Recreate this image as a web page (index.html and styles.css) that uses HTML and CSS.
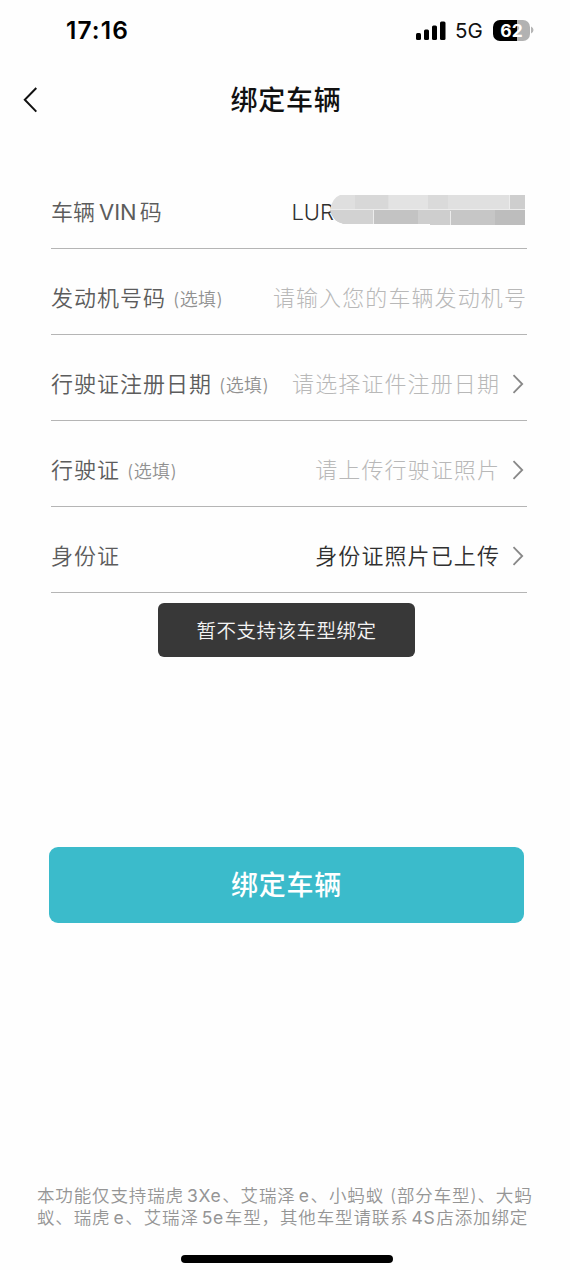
FILE: index.html
```html
<!DOCTYPE html>
<html lang="zh-CN">
<head>
<meta charset="utf-8">
<title>绑定车辆</title>
<link rel="stylesheet" href="styles.css">
</head>
<body>
<div class="screen">
  <header class="status">
    <span class="clock">17:16</span>
    <span class="indicators">
      <svg class="signal" width="30" height="19" viewBox="0 0 30 19"><rect x="0" y="12" width="5" height="7" rx="1.5"/><rect x="8" y="8.5" width="5" height="10.5" rx="1.5"/><rect x="16" y="4.5" width="5" height="14.5" rx="1.5"/><rect x="24" y="0.5" width="5.5" height="18.5" rx="1.5"/></svg>
      <span class="network">5G</span>
      <span class="battery">62</span>
      <svg class="cap" width="3" height="8" viewBox="0 0 3 8"><path d="M0 0.5Q2.5 1.5 2.5 4T0 7.5Z" fill="#b5b5b5"/></svg>
    </span>
  </header>
  <nav class="nav">
    <svg class="back" width="14" height="26" viewBox="0 0 14 26"><path d="M13.3 1L1.8 12.8L13.3 24.6"/></svg>
    <h1 class="title">绑定车辆</h1>
  </nav>
  <main class="form">
    <div class="row">
      <span class="label vin-label">车辆<span class="latin">VIN</span>码</span>
      <span class="vin"><span class="vin-text">LUR</span>
        <svg class="mosaic" width="195" height="30" viewBox="0 0 195 30"><defs><clipPath id="m"><path d="M10 0H195V30H100V29H14Q3 27 0 15Q2 3 10 0Z"/></clipPath></defs><g clip-path="url(#m)"><path fill="#dfdfdf" d="M0 0H195V15H0Z"/><path fill="#d8d8d8" d="M25 0H58V15H25Z"/><path fill="#e3e3e3" d="M59 0H98V15H59Z"/><path fill="#dadada" d="M98 0H118V15H98Z"/><path fill="#e0e0e0" d="M118 0H180V15H118Z"/><path fill="#cecece" d="M180 0H195V15H180Z"/><path fill="#c8c8c8" d="M0 15H195V30H0Z"/><path fill="#d2d2d2" d="M0 15H43V30H0Z"/><path fill="#c3c3c3" d="M44 15H88V30H44Z"/><path fill="#cecece" d="M88 15H120V30H88Z"/><path fill="#c6c6c6" d="M121 15H165V30H121Z"/><path fill="#bdbdbd" d="M165 15H195V30H165Z"/><path fill="#ececec" d="M0 14H195V15H0ZM43 15H44V30H43ZM120 16H121V30H120ZM179 0H180V14H179Z"/></g></svg>
      </span>
    </div>
    <div class="row">
      <span class="label">发动机号码<small class="optional">(选填)</small></span>
      <span class="value placeholder">请输入您的车辆发动机号</span>
    </div>
    <div class="row">
      <span class="label">行驶证注册日期<small class="optional">(选填)</small></span>
      <span class="value placeholder">请选择证件注册日期</span>
      <svg class="chevron" width="12" height="20" viewBox="0 0 12 20"><path d="M1.5 1.2L10.2 10L1.5 18.8"/></svg>
    </div>
    <div class="row">
      <span class="label">行驶证<small class="optional">(选填)</small></span>
      <span class="value placeholder">请上传行驶证照片</span>
      <svg class="chevron" width="12" height="20" viewBox="0 0 12 20"><path d="M1.5 1.2L10.2 10L1.5 18.8"/></svg>
    </div>
    <div class="row">
      <span class="label">身份证</span>
      <span class="value">身份证照片已上传</span>
      <svg class="chevron" width="12" height="20" viewBox="0 0 12 20"><path d="M1.5 1.2L10.2 10L1.5 18.8"/></svg>
    </div>
  </main>
  <div class="toast">暂不支持该车型绑定</div>
  <button class="submit">绑定车辆</button>
  <footer class="footer">
    <p class="note"><span class="line">本功能仅支持瑞虎<span class="latin">3Xe</span>、艾瑞泽<span class="latin">e</span>、小蚂蚁<span class="paren">(</span>部分车型<span class="paren-end">)</span>、大蚂</span><span class="line">蚁、瑞虎<span class="latin">e</span>、艾瑞泽<span class="latin">5e</span>车型，其他车型请联系<span class="latin">4S</span>店添加绑定</span></p>
    <div class="home"></div>
  </footer>
</div>
</body>
</html>
```
FILE: styles.css
```css
* { box-sizing: border-box; }
body {
  margin: 0;
  background: #fefefe;
  font-family: Inter, "Noto Sans CJK SC", sans-serif;
}
.screen {
  width: 570px;
  height: 1270px;
  display: flex;
  flex-direction: column;
  overflow: hidden;
}
.status {
  height: 60px;
  padding: 0 36px 0 66px;
  display: flex;
  align-items: center;
  justify-content: space-between;
  flex: none;
}
.clock { font-size: 24.5px; font-weight: 600; letter-spacing: 1.1px; color: #000; line-height: 30px; }
.indicators { display: flex; align-items: center; }
.network { margin-left: 9px; width: 38px; font-size: 20.5px; color: #111; }
.battery {
  width: 37px;
  height: 21px;
  border-radius: 7px;
  background: linear-gradient(90deg, #000 64%, #b2b2b2 64%);
  color: #fff;
  font-size: 17.5px;
  font-weight: 700;
  line-height: 21px;
  text-align: center;
}
.cap { margin-left: 1px; }
.nav {
  height: 80px;
  padding: 0 23px;
  display: grid;
  grid-template-columns: 40px 1fr 40px;
  align-items: center;
  flex: none;
}
.back path { fill: none; stroke: #111; stroke-width: 2; }
.title { margin: 0; padding: 2px 0 0 2px; font-size: 27px; font-weight: 500; letter-spacing: 0.8px; line-height: 40px; text-align: center; color: #111; }
.form { padding: 23px 43px 0 51px; flex: none; }
.row {
  height: 86px;
  padding-top: 12px;
  border-bottom: 1.5px solid #b5b5b5;
  display: flex;
  align-items: center;
}
.label { margin-right: auto; padding-bottom: 4px; font-size: 22px; letter-spacing: 1px; color: #5c5c5c; white-space: nowrap; font-weight: 350; }
.vin-label { letter-spacing: 0; }
.vin-label .latin { margin: 0 3px 0 4px; letter-spacing: 0; font-weight: 400; }
.optional { margin-left: 7px; font-size: 18px; letter-spacing: 0.4px; color: #919191; }
.value { padding-bottom: 4px; font-size: 22px; letter-spacing: 1.1px; color: #303030; white-space: nowrap; font-weight: 350; }
.placeholder { color: #b8b8b8; font-weight: 300; }
.chevron { margin-left: 12px; margin-right: 3px; flex: none; }
.chevron path { fill: none; stroke: #888; stroke-width: 1.8; }
.vin { display: flex; align-items: center; margin-right: 2px; }
.vin-text { font-size: 22px; color: #303030; font-weight: 350; }
.mosaic { margin-left: -4px; margin-top: -4px; }
.toast {
  width: 257px;
  height: 54px;
  margin: 10px 0 0 158px;
  border-radius: 6px;
  background: #383838;
  color: #f4f4f4;
  font-size: 19.5px;
  font-weight: 350;
  letter-spacing: 0.5px;
  line-height: 56px;
  text-align: center;
  flex: none;
}
.submit {
  width: 475px;
  height: 76px;
  margin: 190px 0 0 49px;
  padding: 0;
  border: 0;
  border-radius: 9px;
  background: #3bbbcb;
  color: #fff;
  font: 500 27px/78px Inter, "Noto Sans CJK SC", sans-serif;
  letter-spacing: 0.8px;
  flex: none;
}
.footer { margin-top: auto; flex: none; }
.note { margin: 0 0 27px 37px; font-size: 17.5px; line-height: 21.5px; letter-spacing: 0.87px; color: #959595; font-weight: 350; }
.line { display: block; white-space: nowrap; }
.note .latin { margin: 0 1px 0 3px; letter-spacing: 0.6px; font-weight: 400; }
.paren { margin-left: 6px; }
.home { width: 212px; height: 8px; margin: 0 0 7px 181px; border-radius: 4px; background: #000; }
```
